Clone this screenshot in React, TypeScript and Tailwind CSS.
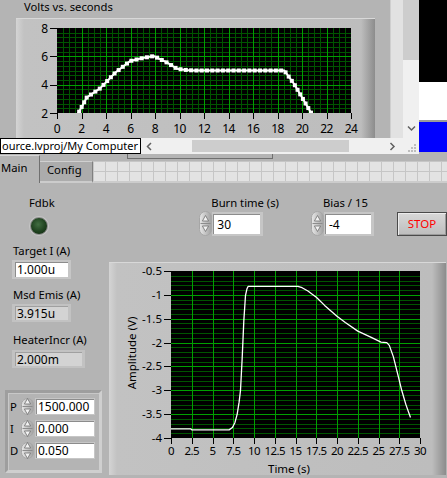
import React from "react";

// LabVIEW front panel: a scrolled sub-window with the setpoint chart on top,
// the tab control with the live feedback controls and waveform below.

type Pt = [number, number];

const SETPOINT: Pt[] = [
  [1.55, 1.8], [1.75, 2], [2.43, 3.1], [3.52, 3.74], [4.75, 4.84], [5.98, 5.67],
  [7.0, 5.88], [7.9, 6.02], [9.0, 5.55], [9.8, 5.12], [10.5, 5.04], [11.17, 5.0],
  [18.55, 5.0], [19.37, 4.03], [20.75, 2], [20.9, 1.8],
];

const AMPLITUDE: Pt[] = [
  [0, -3.81], [2.4, -3.81], [2.5, -3.83], [7.0, -3.83], [7.4, -3.78], [7.7, -3.68],
  [7.97, -3.5], [8.2, -3.25], [8.37, -3.0], [8.57, -2.36], [8.77, -1.55], [8.98, -1.01],
  [9.15, -0.88], [9.3, -0.82], [15.3, -0.82], [15.8, -0.85], [16.5, -0.92], [17.5, -1.05],
  [18.5, -1.22], [20, -1.45], [21, -1.58], [22.5, -1.76], [24, -1.88], [25.3, -1.99],
  [26, -2.0], [26.3, -2.06], [26.8, -2.3], [27.3, -2.65], [27.8, -3.0], [28.3, -3.3],
  [28.85, -3.57],
];

const MINOR = "#005400";
const MAJOR = "#00a000";

const crisp = (v: number) => Math.round(v) + 0.5;

/** Points spaced `step` px apart along a polyline (marker placement). */
function sampleAlong(pts: Pt[], step: number): Pt[] {
  const out: Pt[] = [pts[0]];
  let carry = 0;
  for (let i = 1; i < pts.length; i++) {
    const [x0, y0] = pts[i - 1];
    const [x1, y1] = pts[i];
    const seg = Math.hypot(x1 - x0, y1 - y0);
    let d = step - carry;
    while (d <= seg) {
      out.push([x0 + ((x1 - x0) * d) / seg, y0 + ((y1 - y0) * d) / seg]);
      d += step;
    }
    carry = seg - (d - step);
  }
  return out;
}

function VoltsChart() {
  const L = 41, T = 9, W = 294, H = 85;
  const xs = (t: number) => L + (t * W) / 24;
  const ys = (v: number) => T + H - ((v - 2) * H) / 6;
  const px = SETPOINT.map(([t, v]) => [xs(t), ys(v)] as Pt);
  const marks = sampleAlong(px, 5.3);
  const vx = Array.from({ length: 49 }, (_, i) => i);
  const hy = Array.from({ length: 19 }, (_, i) => i);
  return (
    <svg width="359" height="124" viewBox="0 0 359 124">
      <defs>
        <clipPath id="p1">
          <rect x={L} y={T} width={W} height={H} />
        </clipPath>
      </defs>
      <rect x={L} y={T} width={W} height={H} fill="#000" />
      {vx.filter((i) => i % 4 !== 0).map((i) => (
        <line key={`vm${i}`} x1={crisp(L + (i * W) / 48)} x2={crisp(L + (i * W) / 48)} y1={T} y2={T + H} stroke={MINOR} />
      ))}
      {hy.filter((i) => i % 6 !== 0).map((i) => (
        <line key={`hm${i}`} y1={crisp(T + (i * H) / 18)} y2={crisp(T + (i * H) / 18)} x1={L} x2={L + W} stroke={MINOR} />
      ))}
      {vx.filter((i) => i % 4 === 0 && i > 0 && i < 48).map((i) => (
        <line key={`vM${i}`} x1={crisp(L + (i * W) / 48)} x2={crisp(L + (i * W) / 48)} y1={T} y2={T + H} stroke={MAJOR} />
      ))}
      {[6, 12].map((i) => (
        <line key={`hM${i}`} y1={crisp(T + (i * H) / 18)} y2={crisp(T + (i * H) / 18)} x1={L} x2={L + W} stroke={MAJOR} />
      ))}
      <g clipPath="url(#p1)">
        <polyline points={px.map((p) => p.join(",")).join(" ")} fill="none" stroke="#fff" strokeWidth="2" />
        {marks.map(([x, y], i) => (
          <rect key={i} x={x - 2} y={y - 2} width="4" height="4" fill="#fff" />
        ))}
      </g>
      {[8, 6, 4, 2].map((v) => (
        <g key={v}>
          <line x1={34} x2={L} y1={crisp(ys(v)) - 0} y2={crisp(ys(v))} stroke="#000" />
          <text x={32} y={ys(v) + 4.5} fontSize="12" textAnchor="end" fill="#000">{v}</text>
        </g>
      ))}
      {Array.from({ length: 13 }, (_, i) => i * 2).map((t) => (
        <g key={t}>
          <line x1={crisp(xs(t))} x2={crisp(xs(t))} y1={T + H} y2={T + H + 6} stroke="#000" />
          <text x={xs(t)} y={114} fontSize="12" textAnchor="middle" fill="#000" letterSpacing="-0.6">{t}</text>
        </g>
      ))}
    </svg>
  );
}

function WaveformChart() {
  const L = 62, T = 8, W = 249, H = 167;
  const xs = (t: number) => L + (t * W) / 30;
  const ys = (v: number) => T + ((-0.5 - v) * H) / 3.5;
  const px = AMPLITUDE.map(([t, v]) => `${xs(t).toFixed(1)},${ys(v).toFixed(1)}`).join(" ");
  const hy = Array.from({ length: 36 }, (_, i) => i);
  const yTicks = ["-0.5", "-1", "-1.5", "-2", "-2.5", "-3", "-3.5", "-4"];
  const xTicks = ["0", "2.5", "5", "7.5", "10", "12.5", "15", "17.5", "20", "22.5", "25", "27.5", "30"];
  return (
    <svg width="337" height="213" viewBox="0 0 337 213">
      <rect x={L} y={T} width={W} height={H} fill="#000" />
      {hy.filter((i) => i % 5 !== 0).map((i) => (
        <line key={`hm${i}`} y1={crisp(T + (i * H) / 35)} y2={crisp(T + (i * H) / 35)} x1={L} x2={L + W} stroke={MINOR} />
      ))}
      {hy.filter((i) => i % 5 === 0 && i > 0 && i < 35).map((i) => (
        <line key={`hM${i}`} y1={crisp(T + (i * H) / 35)} y2={crisp(T + (i * H) / 35)} x1={L} x2={L + W} stroke={MAJOR} />
      ))}
      {Array.from({ length: 11 }, (_, i) => i + 1).map((i) => (
        <line key={`v${i}`} x1={crisp(xs(i * 2.5))} x2={crisp(xs(i * 2.5))} y1={T} y2={T + H} stroke={MAJOR} />
      ))}
      <polyline points={px} fill="none" stroke="#fff" strokeWidth="1.3" strokeLinejoin="round" />
      {yTicks.map((s, i) => {
        const y = T + (i * H) / 7;
        return (
          <g key={s}>
            <line x1={55} x2={L} y1={crisp(y)} y2={crisp(y)} stroke="#000" />
            <text x={53} y={y + 4} fontSize="11.5" textAnchor="end" fill="#000">{s}</text>
          </g>
        );
      })}
      {xTicks.map((s, i) => {
        const x = xs(i * 2.5);
        return (
          <g key={s}>
            <line x1={crisp(x)} x2={crisp(x)} y1={T + H} y2={T + H + 6} stroke="#000" />
            <text x={x} y={192} fontSize="11.5" textAnchor="middle" fill="#000" letterSpacing="-0.6">{s}</text>
          </g>
        );
      })}
      <text x={180} y={210} fontSize="11.5" textAnchor="middle" fill="#000">Time (s)</text>
      <text x={0} y={0} fontSize="11.5" textAnchor="middle" fill="#000" transform="translate(27 90) rotate(-90)">Amplitude (V)</text>
    </svg>
  );
}

function IncDec({ h }: { h: number }) {
  const m = h / 2;
  return (
    <svg width="13" height={h} viewBox={`0 0 13 ${h}`} className="shrink-0">
      <defs>
        <linearGradient id="incdec" x1="0" x2="1">
          <stop offset="0" stopColor="#e8e8e8" />
          <stop offset="1" stopColor="#a0a0a0" />
        </linearGradient>
      </defs>
      <rect x="0.5" y="0.5" width="12" height={h - 1} rx="6" fill="url(#incdec)" stroke="#a6a6a6" />
      <line x1="1.5" x2="11.5" y1={m} y2={m} stroke="#8c8c8c" />
      <path d={`M6.5 ${m - 8} L9.6 ${m - 2.5} L3.4 ${m - 2.5} Z`} fill="#f2f2f2" stroke="#6e6e6e" strokeWidth="0.8" />
      <path d={`M6.5 ${m + 8} L9.6 ${m + 2.5} L3.4 ${m + 2.5} Z`} fill="#f2f2f2" stroke="#6e6e6e" strokeWidth="0.8" />
    </svg>
  );
}

function Chevron({ dir }: { dir: "left" | "right" | "down" }) {
  const d = dir === "left" ? "M5 1 L1.5 4.5 L5 8" : dir === "right" ? "M1.5 1 L5 4.5 L1.5 8" : "M1 1.5 L4.5 5 L8 1.5";
  return (
    <svg width="9" height="9" viewBox="0 0 9 9">
      <path d={d} fill="none" stroke="#606060" strokeWidth="1.5" />
    </svg>
  );
}

function TopWindow() {
  return (
    <div className="flex h-[154px]">
      <div className="flex w-[419px] flex-col">
        <div className="flex h-[138px]">
          <div className="w-[390px] overflow-hidden">
            <div className="h-[18px] whitespace-nowrap pl-[24px] text-[11.25px] leading-[14px]">Volts vs. seconds</div>
            <div className="ml-[16px] h-[124px] w-[359px] border-t border-[#d8d8d8] bg-[linear-gradient(90deg,#d4d4d4,#c2c2c2_8px,#bdbdbd_calc(100%_-_14px),#8c8c8c)]">
              <VoltsChart />
            </div>
          </div>
          <div className="w-[13px] border-l border-[#cfcfcf] bg-[#e2e2e2]" />
          <div className="flex w-[16px] flex-col bg-[#f0f0f0]">
            <div className="h-[60px] bg-[#cdcdcd]" />
            <div className="flex flex-1 items-end justify-center pb-[4px]">
              <Chevron dir="down" />
            </div>
          </div>
        </div>
        <div className="flex h-[16px] items-center bg-[#f0f0f0]">
          <div className="h-[16px] w-[141px] overflow-hidden whitespace-nowrap border border-black bg-white pl-[1px] text-[11px] leading-[14px]">
            ource.lvproj/My Computer
          </div>
          <div className="flex w-[18px] justify-center"><Chevron dir="left" /></div>
          <div className="ml-[33px] h-[12px] w-[157px] bg-[#cdcdcd]" />
          <div className="ml-[35px] flex w-[18px] justify-center"><Chevron dir="right" /></div>
          <div className="flex h-[16px] w-[17px] items-end justify-end pb-[1px] pr-[2px]">
            <svg width="9" height="9" viewBox="0 0 9 9">
              <g fill="#bdbdbd">
                <rect x="6" y="0" width="2" height="2" />
                <rect x="3" y="3" width="2" height="2" />
                <rect x="6" y="3" width="2" height="2" />
                <rect x="0" y="6" width="2" height="2" />
                <rect x="3" y="6" width="2" height="2" />
                <rect x="6" y="6" width="2" height="2" />
              </g>
            </svg>
          </div>
        </div>
      </div>
      <div className="flex w-[28px] flex-col">
        <div className="h-[82px] bg-black" />
        <div className="h-[38px] bg-white" />
        <div className="h-[2px] bg-[#9a9a9a]" />
        <div className="h-[30px] bg-[#0000ff]" />
      </div>
    </div>
  );
}

function TabRow() {
  return (
    <div className="flex h-[29px] items-end">
      <div className="h-[28px] w-[40px] border-r border-t border-r-[#707070] border-t-[#d6d6d6] pl-[1px] pt-[5px] text-[11.25px] leading-[14px]">
        Main
      </div>
      <div className="h-[22px] w-[53px] border-b-2 border-r border-t border-b-[#cccccc] border-r-[#808080] border-t-[#d0d0d0] bg-[#acacac] pl-[7px] pt-[0px] text-[11.25px] leading-[16px]">
        Config
      </div>
      <div className="flex h-[29px] flex-1 flex-col">
        <div className="h-[7px]">
          <div className="ml-[34px] h-[5px] w-[146px] border-x border-b border-[#707070]" />
        </div>
        <div className="h-[20px] bg-[#e3e3e3] bg-[linear-gradient(90deg,#c6c6c6_1px,transparent_1px),linear-gradient(#c6c6c6_1px,transparent_1px)] bg-[size:12px_10px]" />
        <div className="h-[2px] bg-[#cccccc]" />
      </div>
    </div>
  );
}

function Label({ children, className }: { children: React.ReactNode; className: string }) {
  return <div className={`whitespace-nowrap text-[11.25px] leading-[14px] ${className}`}>{children}</div>;
}

function LeftColumn() {
  return (
    <div className="flex w-[110px] flex-col">
      <Label className="mt-[13px] pl-[29px]">Fdbk</Label>
      <div className="ml-[30px] mt-[7px] h-[18px] w-[18px] rounded-full border border-[#8e8e8e] bg-[radial-gradient(circle_at_45%_40%,#426e42,#1f421f_55%,#0e240e)] shadow-[0_0_0_1px_#c6c6c6]" />

      <Label className="mt-[9px] pl-[13px]">Target I (A)</Label>
      <div className="ml-[12px] mt-[2px] h-[19px] w-[59px] bg-[#c6c6c6] px-[3px] py-[2px]">
        <div className="h-full border-l border-t border-[#8c8c8c] bg-white pl-[1px] text-[12px] leading-[14px]">1.000u</div>
      </div>

      <Label className="mt-[9px] pl-[13px]">Msd Emis (A)</Label>
      <div className="ml-[12px] mt-[2px] h-[18px] w-[59px] bg-[#c2c2c2] px-[3px] py-[2px]">
        <div className="h-full border-l border-t border-[#a0a0a0] bg-[#d3d3d3] pl-[1px] text-[12px] leading-[13px]">3.915u</div>
      </div>

      <Label className="mt-[11px] pl-[13px]">HeaterIncr (A)</Label>
      <div className="ml-[12px] mt-[3px] h-[18px] w-[73px] bg-[#c2c2c2] px-[3px] py-[2px]">
        <div className="h-full border-l border-t border-[#a0a0a0] bg-[#d3d3d3] pl-[1px] text-[12px] leading-[13px]">2.000m</div>
      </div>

      <div className="ml-[5px] mt-[22px] h-[83px] w-[97px] border-[3px] border-b-[#cfcfcf] border-l-[#9e9e9e] border-r-[#cfcfcf] border-t-[#9e9e9e] px-0 pt-[5px] shadow-[inset_1px_1px_0_#c8c8c8]">
        {[
          ["P", "1500.000"],
          ["I", "0.000"],
          ["D", "0.050"],
        ].map(([k, v]) => (
          <div key={k} className="mb-[5px] flex h-[17px] items-center">
            <div className="w-[13px] pl-[2px] text-[11.25px] leading-[14px]">{k}</div>
            <IncDec h={17} />
            <div className="ml-[1px] h-[17px] w-[60px] bg-[#c6c6c6] p-[1px]">
              <div className="h-full border-l border-t border-[#8c8c8c] bg-white pl-[1px] text-[12px] leading-[14px]">{v}</div>
            </div>
          </div>
        ))}
      </div>
    </div>
  );
}

function Numeric({ label, value, fieldClass }: { label: string; value: string; fieldClass: string }) {
  return (
    <div className="flex flex-col">
      <Label className="mt-[13px] pl-[12px]">{label}</Label>
      <div className="mt-[1px] flex h-[25px] items-start">
        <IncDec h={25} />
        <div className={`mt-[1px] h-[24px] bg-[#c6c6c6] py-[2px] pl-[1px] pr-[3px] ${fieldClass}`}>
          <div className="h-full border-l border-t border-[#8c8c8c] bg-white pl-[3px] text-[12px] leading-[19px]">{value}</div>
        </div>
      </div>
    </div>
  );
}

function RightColumn() {
  return (
    <div className="flex flex-1 flex-col">
      <div className="flex h-[79px] items-start pl-[90px]">
        <Numeric label="Burn time (s)" value="30" fieldClass="w-[51px]" />
        <div className="ml-[32px]">
          <Numeric label="Bias / 15" value="-4" fieldClass="w-[50px]" />
        </div>
        <div className="ml-[23px] mt-[29px] flex h-[24px] w-[50px] items-center justify-center border border-[#4a4a4a] bg-[linear-gradient(#d8d8d8,#bdbdbd)] text-[11.5px] text-[#ff0000] shadow-[inset_1px_1px_0_#ececec,inset_-1px_-1px_0_#9a9a9a]">
          STOP
        </div>
      </div>
      <div className="h-[213px] w-[337px] border-t border-[#d8d8d8] bg-[linear-gradient(90deg,#d4d4d4,#c2c2c2_8px,#bdbdbd_calc(100%_-_14px),#8c8c8c)]">
        <WaveformChart />
      </div>
    </div>
  );
}

export default function App() {
  return (
    <div className="relative h-[478px] w-[447px] overflow-hidden bg-[#b4b4b4] font-['Noto_Sans',sans-serif] text-black">
      <TopWindow />
      <TabRow />
      <div className="flex h-[295px]">
        <LeftColumn />
        <RightColumn />
      </div>
    </div>
  );
}
